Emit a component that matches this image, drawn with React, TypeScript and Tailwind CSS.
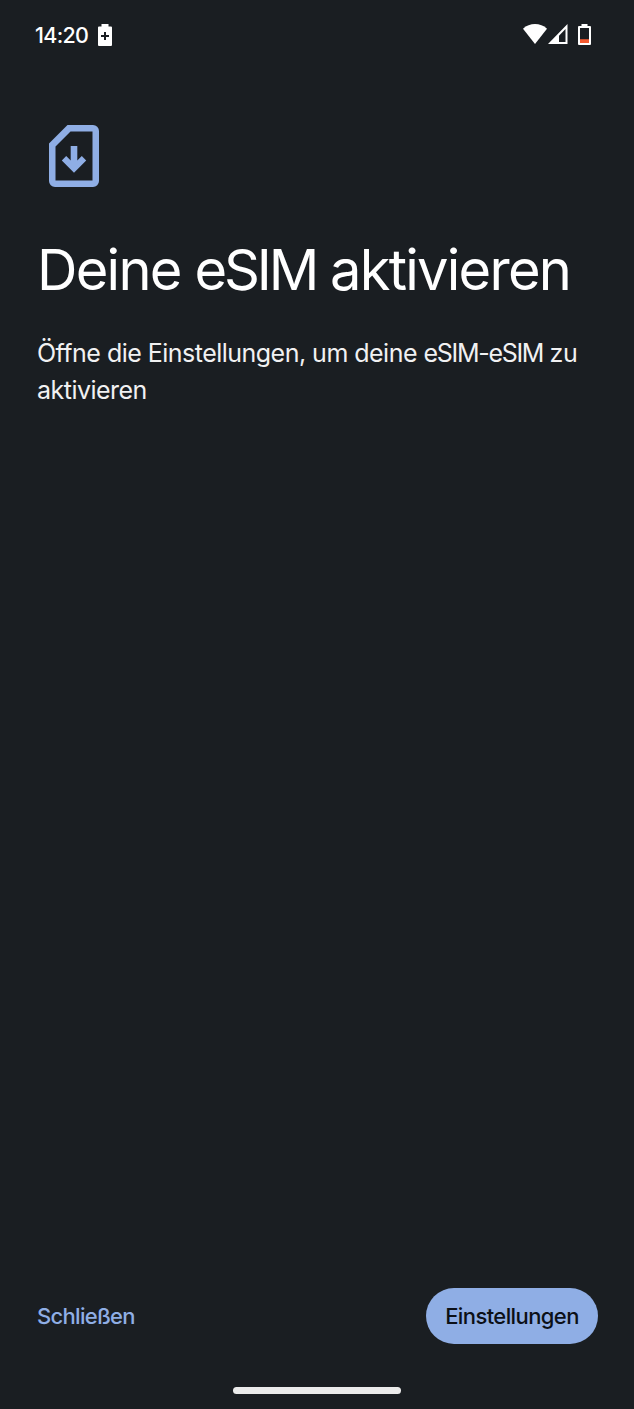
import React from 'react';

const StatusBar = () => (
  <header className="flex h-[70px] items-center justify-between pl-[35px] pr-[43px] text-white">
    <div className="flex items-center gap-[10px]">
      <span className="w-[53px] whitespace-nowrap pt-0.5 text-[21.5px] font-medium leading-none tracking-[-0.7px]">14:20</span>
      {/* Battery saver */}
      <svg width="14" height="22" viewBox="0 0 14 22">
        <path d="M3.500 0h7v2.500H13a1 1 0 0 1 1 1V21a1 1 0 0 1-1 1H1a1 1 0 0 1-1-1V3.500a1 1 0 0 1 1-1h2.500z" fill="#fff" />
        <path d="M7 8v8M3 12h8" stroke="#1a1e22" strokeWidth="2" />
      </svg>
    </div>

    <div className="flex items-center pb-0.5">
      <svg width="24" height="20" viewBox="0 0 24 20">
        <path d="M0 4.700C6.500-1.500 17.500-1.500 24 4.700L12 20z" fill="#fff" />
      </svg>
      <svg width="20" height="20" viewBox="0 0 20 20" className="ml-px">
        <path d="M19.500 0v20H0zM17.500 5L11 11.700V18h6.500z" fill="#fff" fillRule="evenodd" />
      </svg>
      <svg width="13" height="21" viewBox="0 0 13 21" className="ml-[10px]">
        <path d="M3.500 0h6v2H12a1 1 0 0 1 1 1v17a1 1 0 0 1-1 1H1a1 1 0 0 1-1-1V3a1 1 0 0 1 1-1h2.500zM2 4v15h9V4z" fill="#fff" fillRule="evenodd" />
        <path d="M2 15.200h9V19H2z" fill="#f4592f" />
      </svg>
    </div>
  </header>
);

const SimIcon = () => (
  <svg width="50" height="62" viewBox="0 0 50 62" className="ml-3">
    <path
      d="M18.500 0H44a6 6 0 0 1 6 6v50a6 6 0 0 1-6 6H6a6 6 0 0 1-6-6V18.500zM21.500 6.500L6.500 21.500V55.500H43.500V6.500z"
      fill="#8faee5"
      fillRule="evenodd"
    />
    <path d="M21.700 21h6.600v14.500l4.500-4.400 4.400 4.400L25 47.800 12.800 35.500l4.400-4.400 4.500 4.400z" fill="#8faee5" />
  </svg>
);

export default function App() {
  return (
    <div className="flex h-[1409px] w-[634px] flex-col overflow-hidden bg-[#1a1e22] font-['Inter',sans-serif]">
      <StatusBar />

      <main className="flex-1 px-[37px] pt-[55px]">
        <SimIcon />
        <h1 className="mt-[48px] whitespace-nowrap text-[56px] leading-[70px] tracking-[-1.750px] text-white">
          Deine <span className="tracking-[-3.200px]">eSIM</span> aktivieren
        </h1>
        <p className="mt-[30px] whitespace-nowrap text-[25px] leading-[37px] tracking-[-0.520px] text-[#f1f1f2]">
          Öffne die Einstellungen, um deine <span className="tracking-[-1.300px]">eSIM-eSIM</span> zu
          <br />
          aktivieren
        </p>
      </main>

      <footer className="flex items-center justify-between pl-[37px] pr-[36px]">
        <button className="text-[22px] font-medium tracking-[-0.7px] text-[#8faee5]">Schließen</button>
        <button className="h-[56px] w-[172px] rounded-full bg-[#8faee5] text-[22px] font-medium tracking-[-0.6px] text-[#0c1017]">
          Einstellungen
        </button>
      </footer>

      {/* Gesture bar */}
      <div className="ml-[233px] mb-[15px] mt-[43px] h-[7px] w-[168px] rounded-full bg-[#ebebeb]" />
    </div>
  );
}
